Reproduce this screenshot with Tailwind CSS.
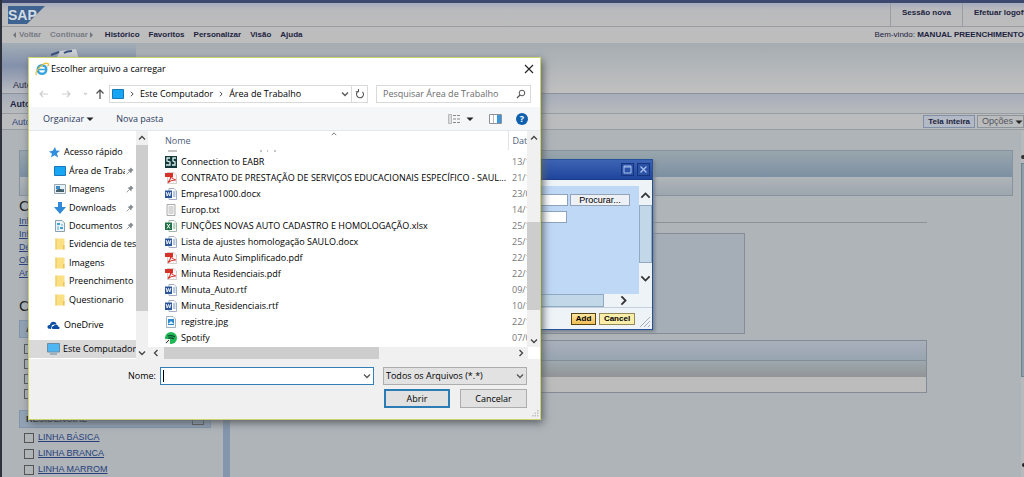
<!DOCTYPE html>
<html lang="pt-BR">
<head>
<meta charset="utf-8">
<title>SAP</title>
<script src="https://cdn.jsdelivr.net/npm/@tailwindcss/browser@4"></script>
</head>
<body class="relative min-h-screen overflow-hidden bg-[#aeb4b8] font-['Liberation_Sans',sans-serif] text-[9px] leading-3 text-[#1c2340]">
<svg class="hidden">
  <symbol id="word" viewBox="0 0 12 12"><path d="M4 .5h5l2.500 2.500v8.500H4z" fill="#fff" stroke="#8d9db5" stroke-width=".8"/><path d="M8 4h2.500M8 6h2.500M8 8h2.500" stroke="#6d93c8"/><path d="M0 2.500h7v7.500H0z" fill="#2b579a"/><path d="M1.200 4l1 4 1.300-3.500L4.800 8l1-4" fill="none" stroke="#fff" stroke-width=".9"/></symbol>
  <symbol id="excel" viewBox="0 0 12 12"><path d="M4 .5h5l2.500 2.500v8.500H4z" fill="#fff" stroke="#8aa596" stroke-width=".8"/><path d="M8 4h2.500M8 6h2.500M8 8h2.500" stroke="#6fae87"/><path d="M0 2.500h7v7.500H0z" fill="#1e7145"/><path d="M2 4l3 4.500M5 4L2 8.500" stroke="#fff"/></symbol>
  <symbol id="pdf" viewBox="0 0 12 12"><path d="M2.500.5H9L11.500 3v8.500h-9z" fill="#f8f5f4" stroke="#c4bcbc" stroke-width=".7"/><path d="M0 1h8v4H0z" fill="#d6322a"/><path d="M3 10.500C5 8 6 6 6 3.500c.5 3 2 4 5 4.500-3-.2-5.500.5-8 2.500z" fill="none" stroke="#d6322a" stroke-width="1.100"/></symbol>
  <symbol id="txt" viewBox="0 0 12 12"><path d="M2 .5h8v11H2z" fill="#f6f6f6" stroke="#999" stroke-width=".8"/><path d="M3.500 3h5M3.500 5h5M3.500 7h5M3.500 9h5" stroke="#aaa" stroke-width=".8"/></symbol>
  <symbol id="folder" viewBox="0 0 12 12"><path d="M1.500.5h9v11h-9z" fill="#fbdf83"/><path d="M1.500.5h1v11h-1z" fill="#e9c55c"/><path d="M9 7h1.500v4.500H9z" fill="#e9c55c"/></symbol>
  <symbol id="pin" viewBox="0 0 10 10"><path d="M6 .5L9.500 4l-1 .5-1.500 1.500-.5 2L2 3.500 4 3 5.500 1.500z" fill="#848b91"/><path d="M4 6L.8 9.200" stroke="#848b91"/></symbol>
  <symbol id="down" viewBox="0 0 8 8"><path d="M1 2.500l3 3 3-3" fill="none" stroke="currentColor" stroke-width="1.300"/></symbol>
  <symbol id="up" viewBox="0 0 8 8"><path d="M1 5.500l3-3 3 3" fill="none" stroke="currentColor" stroke-width="1.300"/></symbol>
  <symbol id="right" viewBox="0 0 8 8"><path d="M2.500 1l3 3-3 3" fill="none" stroke="currentColor" stroke-width="1.300"/></symbol>
  <symbol id="left" viewBox="0 0 8 8"><path d="M5.500 1l-3 3 3 3" fill="none" stroke="currentColor" stroke-width="1.300"/></symbol>
  <symbol id="tri" viewBox="0 0 8 8"><path d="M.5 2.500h7L4 6z" fill="currentColor"/></symbol>
  <symbol id="grip" viewBox="0 0 8 8"><path d="M6 1h1.500v1.500H6zM6 3.500h1.500V5H6zM6 6h1.500v1.500H6zM3.500 3.500H5V5H3.500zM3.500 6H5v1.500H3.500zM1 6h1.500v1.500H1z" fill="#bfbfbf"/></symbol>
</svg>

<div class="flex min-h-screen flex-col border-l-2 border-[#2f323d]">
  <header>
    <div class="flex h-[27px] border-t-[3px] border-b border-t-[#3d4870] border-b-[#999da2] bg-linear-to-b from-[#a4abbb] via-[#b9babd] via-30% to-[#bcbcbc]">
      <svg class="mt-[3px] ml-1.5 h-[18px] w-[37px]" viewBox="0 0 37 18" role="img" aria-label="SAP"><path d="M0 0h37L19 18H0z" fill="#3f6390"/><text x="0" y="14" font-family="Liberation Sans" font-weight="700" font-size="14" fill="#d3dbe4">SAP</text></svg>
      <div class="ml-auto flex text-[8px] font-bold">
        <a href="#" class="w-[72px] border-l border-[#999da2] pt-1 text-center">Sessão nova</a>
        <a href="#" class="w-[62px] border-l border-[#999da2] pt-1 pl-[11px] whitespace-nowrap">Efetuar logoff</a>
      </div>
    </div>
    <nav class="flex h-4 items-center bg-[#bdbdbe] pl-2 text-[8px] font-bold">
      <svg class="size-2 text-[#70747c]" viewBox="0 0 8 8"><path d="M6 1v6L3 4z" fill="currentColor"/></svg>
      <a href="#" class="ml-px text-[#777b84]">Voltar</a>
      <a href="#" class="ml-[9px] text-[#777b84]">Continuar</a>
      <svg class="size-2 text-[#70747c]" viewBox="0 0 8 8"><path d="M2 1v6l3-3z" fill="currentColor"/></svg>
      <a href="#" class="ml-[9px]">Histórico</a><a href="#" class="ml-[9px]">Favoritos</a><a href="#" class="ml-[9px]">Personalizar</a><a href="#" class="ml-[9px]">Visão</a><a href="#" class="ml-[9px]">Ajuda</a>
      <p class="ml-auto"><span class="font-normal">Bem-vindo:</span> MANUAL PREENCHIMENTO</p>
    </nav>
    <div class="flex h-[51px] border-b border-[#8d9299] bg-linear-to-b from-[#a5adb2] to-[#c1c0c1]">
      <div class="flex w-[134px] flex-col bg-linear-to-b from-[#a4adb6] via-[#8391ab] via-45% to-[#b9bbc0]">
        <svg class="ml-12 h-5 w-8" viewBox="0 0 32 20"><path d="M10 8l16-2 4 14H4z" fill="#ccd0d5"/><path d="M1 12l8-3M14 10c3-2 5-2 8-2" stroke="#384f7d" stroke-width="2" fill="none"/></svg>
        <a href="#" class="mt-4 ml-[11px]">Auto</a>
      </div>
    </div>
    <div class="flex h-[19px] items-center bg-linear-to-b from-[#a7adba] to-[#b8bbbd] pl-2 font-bold"><a href="#">Auto</a></div>
    <div class="flex h-[17px] items-center justify-end gap-0.5 border-y border-[#979ca1] bg-[#bbbcbd]">
      <a href="#" class="mr-auto ml-2.5 text-[#28407c]">Auto</a>
      <button class="h-[13px] border border-[#8190a8] bg-[#b4bac5] px-1 text-[8px] leading-[11px] font-bold">Tela inteira</button>
      <button class="flex h-[13px] items-center border border-[#8d949c] pl-1 leading-[11px] text-[#50545c]">Opções<svg class="ml-0.5 size-2 text-[#222]"><use href="#tri"/></svg></button>
    </div>
  </header>

  <div class="flex flex-1">
    <main class="ml-[17px] flex flex-1 flex-col pt-5">
      <section class="border border-[#87929e]">
        <div class="h-[26px] bg-linear-to-b from-[#99a6ad] to-[#7c90a3]"></div>
        <div class="h-[18px] bg-linear-to-b from-[#afb5b9] to-[#9da6ae]"></div>
      </section>
      <div class="flex flex-1">
        <aside class="w-[192px] text-[#28407c]">
          <h2 class="mt-0.5 text-[15px] leading-4 text-[#222]">Cenários</h2>
          <ul class="mt-px leading-[13px] underline">
            <li><a href="#">Informações</a></li><li><a href="#">Informações</a></li><li><a href="#">Dependentes</a></li><li><a href="#">Objetos</a></li><li><a href="#">Anexos</a></li>
          </ul>
          <h2 class="mt-[18px] text-[15px] leading-4 text-[#222]">Coberturas</h2>
          <div class="mt-1.5 h-[18px] border border-[#8295ad] bg-[#93a3b6] pl-1.5 leading-4 font-bold text-[#222]">AUTO</div>
          <div class="mt-1.5 ml-[5px] flex flex-col gap-[5px]">
            <input type="checkbox" checked aria-label="Auto 1" class="size-[10px] appearance-none border border-[#555]"><input type="checkbox" aria-label="Auto 2" class="size-[10px] appearance-none border border-[#555]"><input type="checkbox" aria-label="Auto 3" class="size-[10px] appearance-none border border-[#555]"><input type="checkbox" aria-label="Auto 4" class="size-[10px] appearance-none border border-[#555]">
          </div>
          <label class="mt-[11px] flex h-[18px] items-center justify-between border border-[#8295ad] bg-[#93a3b6] px-1.5 font-bold text-[#222]">RESIDENCIAL<input type="checkbox" class="size-3 appearance-none border border-[#555]"></label>
          <div class="mt-0.5 ml-[5px] flex flex-col gap-px leading-[15px] underline">
            <label class="flex items-center gap-1"><input type="checkbox" class="size-[10px] appearance-none border border-[#555]">LINHA BÁSICA</label>
            <label class="flex items-center gap-1"><input type="checkbox" class="size-[10px] appearance-none border border-[#555]">LINHA BRANCA</label>
            <label class="flex items-center gap-1"><input type="checkbox" class="size-[10px] appearance-none border border-[#555]">LINHA MARROM</label>
          </div>
        </aside>
        <div class="ml-3 w-[7px] bg-[#8496ac]"></div>
        <div class="mr-[86px] flex-1">
          <div class="h-[27px] border-b border-[#8b9299]"></div>
          <div class="mt-2.5 mr-[182px] h-[101px] border border-[#858c95] bg-[#a5aeb7]"></div>
          <div class="mt-1.5 border border-[#838b95]">
            <div class="h-5 border-b border-[#838d98] bg-linear-to-b from-[#a9afbb] to-[#98a5b0]"></div>
            <div class="h-4 bg-linear-to-b from-[#9da8ae] to-[#929598]"></div>
            <div class="h-[15px] bg-[#bcbcbc]"></div>
          </div>
        </div>
      </div>
    </main>
    <div class="ml-2 flex w-[3px] flex-col bg-[#b7babc]">
      <div class="mt-[25px] h-1 w-[3px] rounded-l-full bg-[#333]"></div>
      <div class="mt-1 h-[214px] border border-r-0 border-[#6f8390] bg-[#8a9fa8]"></div>
      <div class="mt-auto mb-2.5 ml-px h-1 rounded-l-full bg-[#222]"></div>
    </div>
  </div>
</div>

<section class="absolute top-[159px] left-[400px] flex h-[171px] w-[253px] flex-col border border-[#27509a] bg-[#eef3f8] text-black shadow-[2px_2px_3px_#7d858d]" aria-label="Anexo">
  <div class="flex h-5 items-center justify-end gap-[3px] border-b border-[#1a3a8a] bg-linear-to-b from-[#3d63b4] to-[#1f469c] pr-0.5">
    <button aria-label="Maximizar" class="border border-[#16347d] bg-[#2b52a6] p-px"><svg class="size-[9px]" viewBox="0 0 9 9"><path d="M1 1h7v7H1zM1 2h7" fill="none" stroke="#a8c0ee"/></svg></button>
    <button aria-label="Fechar" class="border border-[#16347d] bg-[#2b52a6] p-px"><svg class="size-[9px]" viewBox="0 0 9 9"><path d="M1.500 1.500l6 6M7.500 1.500l-6 6" stroke="#a8c0ee" stroke-width="1.300"/></svg></button>
  </div>
  <div class="mt-1.5 flex h-[108px]">
    <div class="flex flex-1 flex-col items-end bg-[#bfd8f5]">
      <div class="mt-2 mr-[9px] flex gap-0.5"><input aria-label="Arquivo" class="h-3 w-[110px] border border-[#8ba3bf] bg-white"><button class="h-3 w-[60px] border border-[#93a4b8] bg-[#edf1f5] leading-[10px]">Procurar...</button></div>
      <input aria-label="Descrição" class="mt-[5px] mr-[72px] h-3 w-[110px] border border-[#8ba3bf] bg-white">
    </div>
    <div class="flex w-[13px] flex-col items-center text-[#333]">
      <svg class="my-1 size-[11px] shrink-0"><use href="#up" width="11" height="11"/></svg>
      <div class="h-[58px] w-full border border-[#91aac4] bg-[#c2d7e8]"></div>
      <svg class="mt-2.5 size-[11px] shrink-0"><use href="#down" width="11" height="11"/></svg>
    </div>
  </div>
  <div class="flex h-[13px] items-center text-[#333]"><div class="h-full w-[203px] border border-[#91aac4] bg-[#c2d8e9]"></div><svg class="ml-3.5 size-[11px]"><use href="#right" width="11" height="11"/></svg></div>
  <div class="flex flex-1 items-center justify-end gap-[3px] border-t border-[#c6d0dc]">
    <button class="h-3 w-[25px] border border-[#5a4312] bg-linear-to-b from-[#ffe7a0] to-[#f0be55] text-[8px] leading-[10px] font-bold">Add</button>
    <button class="h-3 w-9 border border-[#988a57] bg-[#fbeeab] text-[8px] leading-[10px] font-bold">Cancel</button>
    <svg class="size-3.5 self-end" viewBox="0 0 14 14"><path d="M2 12L12 2M6 12l6-6M10 12l2-2" stroke="#a8b2bd"/></svg>
  </div>
</section>

<section role="dialog" aria-label="Escolher arquivo a carregar" class="absolute top-[57px] left-[28px] flex h-[363px] w-[513px] flex-col border border-[#cdd36d] bg-white font-['Open_Sans','Noto_Sans',sans-serif] text-[9px] leading-3 text-black shadow-[2px_3px_8px_#5d6369]">
  <div class="flex h-[22px] shrink-0 items-center pl-1.5">
    <svg class="size-3.5" viewBox="0 0 14 14"><circle cx="7" cy="7.500" r="4.300" fill="none" stroke="#38a5e0" stroke-width="2.400"/><path d="M4 7.500h7" stroke="#38a5e0" stroke-width="1.600"/><path d="M1.500 13C-1 10 9-1 13 1.500c.7.700.3 2-.5 3" fill="none" stroke="#e8bd30" stroke-width="1.200"/></svg>
    <h1 class="ml-0.5">Escolher arquivo a carregar</h1>
    <button aria-label="Fechar" class="mr-1.5 ml-auto"><svg class="size-2.5" viewBox="0 0 10 10"><path d="M1 1l8 8M9 1L1 9" stroke="#222" stroke-width="1.100"/></svg></button>
  </div>
  <div class="flex h-[27px] shrink-0 items-center pr-[9px] pl-2.5">
    <svg class="h-3 w-[70px]" viewBox="0 0 70 12"><path d="M9 6H1M4 3L1 6l3 3M23 6h8M28 3l3 3-3 3M45 5l1.500 1.500L48 5" fill="none" stroke="#cfcfcf" stroke-width="1.200"/><path d="M61 11V2M57.500 5.500L61 2l3.500 3.500" fill="none" stroke="#555" stroke-width="1.300"/></svg>
    <div class="flex h-[18px] flex-1 items-center border border-[#d9d9d9] pl-0.5">
      <svg class="h-2.5 w-3" viewBox="0 0 12 10"><path d="M.5.5h11v9H.5z" fill="#17a5f4" stroke="#1978b8"/></svg>
      <svg class="mx-[5px] size-1.5 text-[#444]"><use href="#right" width="6" height="6"/></svg><span class="whitespace-nowrap">Este Computador</span>
      <svg class="mx-[5px] size-1.5 text-[#444]"><use href="#right" width="6" height="6"/></svg><span>Área de Trabalho</span>
      <svg class="mr-0.5 ml-auto size-2 text-[#555]"><use href="#down"/></svg>
      <button aria-label="Atualizar" class="flex h-full w-4 items-center justify-center border-l border-[#d9d9d9]"><svg class="size-2.5" viewBox="0 0 10 10"><path d="M3.300 2.200A3.500 3.500 0 1 0 7.500 2.800M3.500 0v2.800H.8" fill="none" stroke="#555" stroke-width="1.100"/></svg></button>
    </div>
    <div class="ml-2 flex h-[18px] w-[155px] items-center border border-[#d9d9d9] pr-1 pl-1.5"><input aria-label="Pesquisar" placeholder="Pesquisar Área de Trabalho" class="min-w-0 flex-1 placeholder:text-[#6b6b6b]"><svg class="size-2.5" viewBox="0 0 10 10"><circle cx="6" cy="4" r="2.800" fill="none" stroke="#555"/><path d="M4 6L1 9" stroke="#555" stroke-width="1.300"/></svg></div>
  </div>
  <div class="flex h-6 shrink-0 items-center border-b border-[#e6e7e8] bg-[#f5f6f7] pr-3 pl-3.5 text-[#2b3a5e]">
    <button class="flex items-center gap-0.5">Organizar<svg class="size-2 text-[#222]"><use href="#tri"/></svg></button>
    <button class="ml-[22px]">Nova pasta</button>
    <button aria-label="Exibição" class="ml-auto flex items-center gap-1.5"><svg class="h-2.5 w-3" viewBox="0 0 12 10"><path d="M.5.5h3v9h-3z" fill="#ddd" stroke="#999" stroke-width=".6"/><path d="M5 1.500h7M5 5h7M5 8.500h7" stroke="#888" stroke-dasharray="3 1"/></svg><svg class="size-2 text-[#222]"><use href="#tri"/></svg></button>
    <button aria-label="Painel de visualização" class="ml-[15px]"><svg class="h-2.5 w-[13px]" viewBox="0 0 13 10"><path d="M.5.5h12v9H.5z" fill="#fff" stroke="#8b9299"/><path d="M8 1h4v8H8z" fill="#3b96dc"/><path d="M4.500 1v8" stroke="#bbb"/></svg></button>
    <button aria-label="Ajuda" class="ml-3.5 size-3 rounded-full bg-[#0e5fae] text-center font-bold text-white">?</button>
  </div>

  <div class="flex min-h-0 flex-1">
    <nav class="flex w-[107px] flex-col overflow-hidden whitespace-nowrap" aria-label="Pastas">
      <div class="mt-3 grid h-[166px] auto-rows-fr grid-cols-1 items-center">
        <a href="#" class="flex items-center pl-5"><svg class="mr-1 size-[11px]" viewBox="0 0 11 11"><path d="M6 0l1.200 3.500 3.800.3-3 2.400 1 4.300-3.400-2.200L2 10.500l1-3.800L0 4.400l3.800-.6z" fill="#2f8ede"/></svg>Acesso rápido</a>
        <a href="#" class="flex items-center pr-0.5 pl-[25px]"><svg class="mr-[3px] h-2.5 w-3 shrink-0" viewBox="0 0 12 10"><path d="M.5.500h11v9H.5z" fill="#17a5f4" stroke="#1978b8"/></svg><span class="flex-1 overflow-hidden">Área de Trabalho</span><svg class="ml-px size-2 shrink-0"><use href="#pin"/></svg></a>
        <a href="#" class="flex items-center pr-0.5 pl-[25px]"><svg class="mr-[3px] h-2.5 w-3 shrink-0" viewBox="0 0 12 10"><path d="M.5.500h11v9H.5z" fill="#e6f1f8" stroke="#9aa7b0"/><path d="M2 2h4v3H2z" fill="#3a8bc9"/><path d="M2 6c3-2 5 0 8-1v3H2z" fill="#42636e"/></svg><span class="flex-1">Imagens</span><svg class="size-2 shrink-0"><use href="#pin"/></svg></a>
        <a href="#" class="flex items-center pr-0.5 pl-[25px]"><svg class="mr-[3px] size-3 shrink-0" viewBox="0 0 12 12"><path d="M4 0h4v5h4l-6 7-6-7h4z" fill="#2f8bd8"/></svg><span class="flex-1">Downloads</span><svg class="size-2 shrink-0"><use href="#pin"/></svg></a>
        <a href="#" class="flex items-center pr-0.5 pl-[25px]"><svg class="mr-[3px] size-3 shrink-0" viewBox="0 0 12 12"><path d="M1.500.500H8L10.500 3v8.500h-9z" fill="#eaf4fa" stroke="#8b9fac"/><path d="M3 3h3v2H3zM6 7h3v2H6z" fill="#42a0d0"/><path d="M3 7h2M7 5h2M3 9h2" stroke="#5ea9c8"/></svg><span class="flex-1">Documentos</span><svg class="size-2 shrink-0"><use href="#pin"/></svg></a>
        <a href="#" class="flex items-center pl-[25px]"><svg class="mr-[3px] size-3 shrink-0"><use href="#folder"/></svg>Evidencia de teste</a>
        <a href="#" class="flex items-center pl-[25px]"><svg class="mr-[3px] size-3 shrink-0"><use href="#folder"/></svg>Imagens</a>
        <a href="#" class="flex items-center pl-[25px]"><svg class="mr-[3px] size-3 shrink-0"><use href="#folder"/></svg>Preenchimento</a>
        <a href="#" class="flex items-center pl-[25px]"><svg class="mr-[3px] size-3 shrink-0"><use href="#folder"/></svg>Questionario</a>
      </div>
      <a href="#" class="mt-[7px] flex h-[18px] items-center pl-[18px]"><svg class="mr-1 h-2.5 w-[13px]" viewBox="0 0 13 10"><path d="M1 8.500C-.5 6 1.500 4.500 3 5c.5-4 5.500-4 6.500-1L5 5 4 9z" fill="#0b4da2"/><path d="M5.500 9C4 7 6 5.500 7 6c1-2.500 4-1.500 4 .5 2 0 2 2.500.5 2.500z" fill="#0b4da2"/></svg>OneDrive</a>
      <a href="#" class="mt-1.5 flex h-[18px] items-center bg-[#d9d9d9] pl-[18px]"><svg class="mr-[3px] h-3 w-[13px] shrink-0" viewBox="0 0 13 12"><path d="M.5.500h12v8.500H.5z" fill="#4db6f3" stroke="#6c8ea5"/><path d="M3 11h7" stroke="#8aa4b5" stroke-width="1.500"/></svg>Este Computador</a>
    </nav>
    <div class="flex w-3 flex-col items-center bg-[#f0f0f0] text-[#444]">
      <svg class="my-[3px] size-2 shrink-0"><use href="#up"/></svg>
      <div class="h-[166px] w-full bg-[#cdcdcd]"></div>
      <svg class="mt-auto mb-0.5 size-2 shrink-0"><use href="#down"/></svg>
    </div>
    <div class="flex min-w-0 flex-1 flex-col">
      <div class="flex min-h-0 flex-1">
        <table class="h-fit w-[379px] table-fixed border-collapse text-left whitespace-nowrap">
          <thead><tr class="text-[#4c607a]"><th class="w-[360px] p-0 pl-[17px] font-normal"><span class="flex h-[19px] items-start"><span class="pt-1">Nome</span><svg class="ml-[139px] h-1.5 w-2 text-[#777]"><use href="#up" width="8" height="6"/></svg></span></th><th class="w-[19px] overflow-hidden border-l border-[#e3e3e3] p-0 pl-1 font-normal">Dat</th></tr></thead>
          <tbody><tr><td colspan="2" class="h-1 p-0 pl-5"><svg class="block h-1 w-28" viewBox="0 0 112 4"><path d="M0 1h9M92 1h2M99 1h1M106 1h2" stroke="#8a8a8a"/></svg></td></tr></tbody>
          <tbody class="[&_td]:h-4 [&_td]:overflow-hidden [&_td]:p-0 [&_td:first-child]:pl-[17px] [&_td:last-child]:pl-1 [&_td:last-child]:text-[#777] [&_svg]:mr-1 [&_svg]:size-3 [&_svg]:shrink-0 [&_div]:flex [&_div]:items-center">
            <tr><td><div><svg viewBox="0 0 12 12"><path d="M0 0h12v12H0z" fill="#12373c"/><path d="M5 2H2v3l3 1v3H1M11 2H8v3l2 1v3H7" fill="none" stroke="#d9efe8" stroke-width="1.300"/></svg>Connection to EABR</div></td><td>13/1</td></tr>
            <tr><td><div><svg><use href="#pdf"/></svg>CONTRATO DE PRESTAÇÃO DE SERVIÇOS EDUCACIONAIS ESPECÍFICO - SAUL...</div></td><td>21/1</td></tr>
            <tr><td><div><svg><use href="#word"/></svg>Empresa1000.docx</div></td><td>23/0</td></tr>
            <tr><td><div><svg><use href="#txt"/></svg>Europ.txt</div></td><td>14/1</td></tr>
            <tr><td><div><svg><use href="#excel"/></svg>FUNÇÕES NOVAS AUTO CADASTRO E HOMOLOGAÇÃO.xlsx</div></td><td>25/1</td></tr>
            <tr><td><div><svg><use href="#word"/></svg>Lista de ajustes homologação SAULO.docx</div></td><td>25/1</td></tr>
            <tr><td><div><svg><use href="#pdf"/></svg>Minuta Auto Simplificado.pdf</div></td><td>22/1</td></tr>
            <tr><td><div><svg><use href="#pdf"/></svg>Minuta Residenciais.pdf</div></td><td>22/1</td></tr>
            <tr><td><div><svg><use href="#word"/></svg>Minuta_Auto.rtf</div></td><td>09/1</td></tr>
            <tr><td><div><svg><use href="#word"/></svg>Minuta_Residenciais.rtf</div></td><td>10/1</td></tr>
            <tr><td><div><svg viewBox="0 0 12 12"><path d="M1.500.500H8L10.500 3v8.500h-9z" fill="#f4fafd" stroke="#8b9fac" stroke-width=".8"/><path d="M3 3h6v6H3z" fill="#2d89cf"/><path d="M3 8l3-3 3 3z" fill="#d8eefa"/></svg>registre.jpg</div></td><td>22/1</td></tr>
            <tr><td><div><svg viewBox="0 0 12 12"><circle cx="6" cy="6" r="6" fill="#1fb954"/><path d="M2.500 4c3-1 5-.5 7.500.7M3 6.200c2.500-.8 4.500-.3 6 .6" stroke="#143" stroke-width="1.200" fill="none"/><path d="M0 7h5v5H0z" fill="#eee"/><path d="M1 11l3-3" stroke="#333"/></svg>Spotify</div></td><td>07/0</td></tr>
          </tbody>
        </table>
        <div class="flex flex-1 flex-col items-center bg-[#f0f0f0] text-[#444]">
          <svg class="mt-[3px] size-2 shrink-0"><use href="#up"/></svg>
          <div class="mt-20 h-[88px] w-full bg-[#cdcdcd]"></div>
          <svg class="mt-auto mb-0.5 size-2 shrink-0"><use href="#down"/></svg>
        </div>
      </div>
      <div class="mr-3 flex h-3 items-center bg-[#f0f0f0] text-[#444]"><svg class="mx-1 size-2"><use href="#left"/></svg><div class="h-full w-[215px] bg-[#cdcdcd]"></div><svg class="mr-[3px] ml-auto size-2"><use href="#right"/></svg></div>
    </div>
  </div>

  <form class="flex h-[60px] shrink-0 flex-col bg-[#f0f0f0] pt-2 pr-[13px]">
    <div class="flex items-center">
      <label for="nome" class="w-[127px] text-right">Nome:</label>
      <div class="ml-1 flex h-[18px] flex-1 items-center border border-[#3280b8] bg-white pr-0.5 pl-0.5"><span class="h-3 w-px bg-black"></span><input id="nome" class="min-w-0 flex-1 outline-none"><svg class="size-2 text-[#555]"><use href="#down"/></svg></div>
      <div class="relative ml-[9px] w-36"><select aria-label="Tipo de arquivo" class="h-[18px] w-full appearance-none border border-[#adadad] bg-[#e2e2e2] pl-0.5"><option>Todos os Arquivos (*.*)</option></select><svg class="pointer-events-none absolute top-[5px] right-[3px] size-2 text-[#555]"><use href="#down"/></svg></div>
    </div>
    <div class="mt-1 flex justify-end gap-2.5">
      <button type="button" class="h-[19px] w-[66px] border-2 border-[#2b7cb5] bg-[#e1e1e1] leading-[15px]">Abrir</button>
      <button type="button" class="h-[19px] w-[67px] border border-[#adadad] bg-[#e1e1e1] leading-[17px]">Cancelar</button>
    </div>
    <svg class="mt-px -mr-3 size-2 self-end"><use href="#grip"/></svg>
  </form>
</section>
</body>
</html>
